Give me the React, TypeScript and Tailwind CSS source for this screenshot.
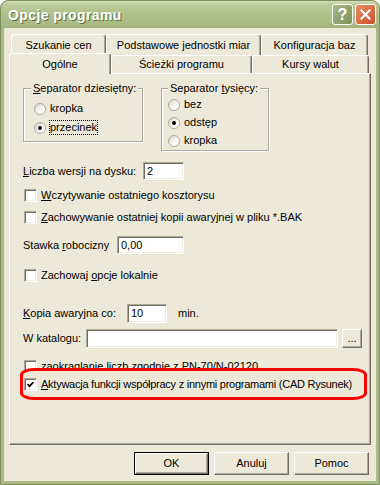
import React from "react";

function Check({ checked }: { checked?: boolean }) {
  return (
    <div className="w-[13px] h-[13px] shrink-0 bg-white border border-t-[#ACA899] border-l-[#ACA899] border-b-white border-r-white shadow-[inset_1px_1px_0_#716F64,inset_-1px_-1px_0_#F1EFE2] flex items-center justify-center">
      {checked && (
        <svg width="7" height="7" viewBox="0 0 7 7">
          <path d="M0.5 3 L2.5 5.2 L6.6 1" stroke="black" strokeWidth="1.7" fill="none" />
        </svg>
      )}
    </div>
  );
}

function Radio({ checked }: { checked?: boolean }) {
  return (
    <div className="w-[12px] h-[12px] shrink-0 rounded-full bg-[linear-gradient(135deg,#D8D5C6,#FFFFFF_70%)] border border-[#ACA899] flex items-center justify-center">
      {checked && <div className="w-[4px] h-[4px] rounded-full bg-black" />}
    </div>
  );
}

function Tab({ label, w, selected }: { label: string; w: string; selected?: boolean }) {
  if (selected) {
    return (
      <div
        className={`${w} h-[21px] mb-[-1px] relative z-10 bg-[#ECE9D8] border-l border-t border-white border-r border-r-[#716F64] rounded-t-[3px] shadow-[inset_-1px_0_0_#ACA899] flex items-center justify-center`}
      >
        {label}
      </div>
    );
  }
  return (
    <div
      className={`${w} h-full bg-[#ECE9D8] border-l border-t border-white border-r border-r-[#716F64] rounded-t-[3px] shadow-[inset_-1px_0_0_#ACA899] flex items-center justify-center`}
    >
      {label}
    </div>
  );
}

function Btn({ children, def }: { children: React.ReactNode; def?: boolean }) {
  if (def) {
    return (
      <div className="w-[75px] h-[23px] border border-black">
        <div className="w-full h-full bg-[#ECE9D8] border border-t-white border-l-white border-b-[#716F64] border-r-[#716F64] shadow-[inset_-1px_-1px_0_#ACA899] flex items-center justify-center">
          {children}
        </div>
      </div>
    );
  }
  return (
    <div className="w-[75px] h-[23px] bg-[#ECE9D8] border border-t-white border-l-white border-b-[#716F64] border-r-[#716F64] shadow-[inset_-1px_-1px_0_#ACA899] flex items-center justify-center">
      {children}
    </div>
  );
}

export default function App() {
  return (
    <div className="w-[380px] h-[485px] overflow-hidden bg-[#A9B987] border border-[#7E905A] rounded-t-[8px] flex flex-col font-['Liberation_Sans','Arial',sans-serif] text-[11px] leading-[13px] text-black whitespace-nowrap">
      {/* Title bar */}
      <div className="h-[27px] shrink-0 rounded-t-[7px] bg-[linear-gradient(to_bottom,#D6E1B8_0%,#BCCB99_12%,#B0C08B_50%,#A9BA84_85%,#A0B17B_100%)] flex items-center justify-between pl-[7px] pr-[3px]">
        <span className="text-white font-bold text-[14px] tracking-[0.4px] leading-[16px] [text-shadow:1px_1px_0_#5F6F3C]">Opcje programu</span>
        <div className="flex gap-[2px]">
          <div className="w-[21px] h-[21px] rounded-[3px] border border-white bg-[linear-gradient(135deg,#A9B884,#7F9058)] flex items-center justify-center text-white font-bold text-[16px] leading-[16px]">
            ?
          </div>
          <div className="w-[21px] h-[21px] rounded-[3px] border border-white bg-[linear-gradient(135deg,#EE8C63,#C8502C)] flex items-center justify-center">
            <svg width="11" height="11" viewBox="0 0 11 11">
              <path d="M1.5 1.5 L9.5 9.5 M9.5 1.5 L1.5 9.5" stroke="white" strokeWidth="2.2" strokeLinecap="square" />
            </svg>
          </div>
        </div>
      </div>

      {/* Client area */}
      <div className="mx-[3px] mb-[3px] h-[453px] bg-[#ECE9D8] flex flex-col">
        {/* tabs */}
        <div className="mt-[6px] ml-[5px] flex flex-col">
          <div className="h-[21px] pl-[2px] flex">
            <Tab label="Szukanie cen" w="w-[95px]" />
            <Tab label="Podstawowe jednostki miar" w="w-[155px]" />
            <Tab label="Konfiguracja baz" w="w-[107px]" />
          </div>
          <div className="h-[18px] flex items-end">
            <Tab label="Ogólne" w="w-[102px]" selected />
            <Tab label="Ścieżki programu" w="w-[141px]" />
            <Tab label="Kursy walut" w="w-[117px]" />
          </div>
        </div>

        {/* panel */}
        <div className="mx-[5px] h-[372px] border border-t-white border-l-white border-r-[#716F64] border-b-[#716F64] shadow-[inset_-1px_-1px_0_#ACA899] pl-[13px] flex flex-col">
          {/* groups */}
          <div className="mt-[14px] flex items-start">
            <div className="relative w-[120px] h-[54px] border border-[#ACA899] shadow-[inset_1px_1px_0_white,1px_1px_0_white] pt-[13px] pl-[10px] flex flex-col gap-[6px]">
              <span className="absolute -top-[7px] left-[7px] px-[2px] bg-[#ECE9D8]">
                <u>S</u>eparator dziesiętny:
              </span>
              <div className="h-[13px] flex items-center">
                <Radio />
                <span className="ml-[4px]">kropka</span>
              </div>
              <div className="h-[13px] flex items-center">
                <Radio checked />
                <span className="ml-[3px] border border-dotted border-black px-0 leading-[13px]">przecinek</span>
              </div>
            </div>
            <div className="relative ml-[18px] w-[108px] h-[63px] border border-[#ACA899] shadow-[inset_1px_1px_0_white,1px_1px_0_white] pt-[9px] pl-[6px] flex flex-col gap-[5px]">
              <span className="absolute -top-[7px] left-[6px] px-[2px] bg-[#ECE9D8]">
                Separator <u>t</u>ysięcy:
              </span>
              <div className="h-[13px] flex items-center">
                <Radio />
                <span className="ml-[4px]">bez</span>
              </div>
              <div className="h-[13px] flex items-center">
                <Radio checked />
                <span className="ml-[4px]">odstęp</span>
              </div>
              <div className="h-[13px] flex items-center">
                <Radio />
                <span className="ml-[4px]">kropka</span>
              </div>
            </div>
          </div>

          {/* Liczba wersji */}
          <div className="mt-[11px] h-[18px] flex items-center">
            <span className="w-[120px]">
              <u>L</u>iczba wersji na dysku:
            </span>
            <div className="w-[41px] h-[18px] bg-white border border-t-[#ACA899] border-l-[#ACA899] border-b-white border-r-white shadow-[inset_1px_1px_0_#716F64,inset_-1px_-1px_0_#F1EFE2] pl-[3px] flex items-center">
              2
            </div>
          </div>

          <div className="mt-[9px] h-[13px] flex items-center ml-[1px]">
            <Check />
            <span className="ml-[4px]">
              <u>W</u>czytywanie ostatniego kosztorysu
            </span>
          </div>

          <div className="mt-[9px] h-[13px] flex items-center ml-[1px]">
            <Check />
            <span className="ml-[4px]">
              <u>Z</u>achowywanie ostatniej kopii awaryjnej w pliku *.BAK
            </span>
          </div>

          <div className="mt-[12px] h-[18px] flex items-center">
            <span className="w-[94px]">
              Stawka <u>r</u>obocizny
            </span>
            <div className="w-[67px] h-[18px] bg-white border border-t-[#ACA899] border-l-[#ACA899] border-b-white border-r-white shadow-[inset_1px_1px_0_#716F64,inset_-1px_-1px_0_#F1EFE2] pl-[3px] flex items-center">
              0,00
            </div>
          </div>

          <div className="mt-[15px] h-[13px] flex items-center ml-[1px]">
            <Check />
            <span className="ml-[4px]">
              Zachowaj <u>o</u>pcje lokalnie
            </span>
          </div>

          <div className="mt-[22px] h-[19px] flex items-center">
            <span className="w-[104px]">
              <u>K</u>opia awaryjna co:
            </span>
            <div className="w-[40px] h-[19px] bg-white border border-t-[#ACA899] border-l-[#ACA899] border-b-white border-r-white shadow-[inset_1px_1px_0_#716F64,inset_-1px_-1px_0_#F1EFE2] pl-[3px] flex items-center">
              10
            </div>
            <span className="ml-[11px]">min.</span>
          </div>

          <div className="mt-[6px] h-[19px] flex items-center">
            <span className="w-[63px]">W katalogu:</span>
            <div className="w-[252px] h-[19px] bg-white border border-t-[#ACA899] border-l-[#ACA899] border-b-white border-r-white shadow-[inset_1px_1px_0_#716F64,inset_-1px_-1px_0_#F1EFE2]" />
            <div className="ml-[4px] w-[20px] h-[19px] bg-[#ECE9D8] border border-t-white border-l-white border-b-[#716F64] border-r-[#716F64] shadow-[inset_-1px_-1px_0_#ACA899] flex items-center justify-center leading-[10px] pb-[2px]">
              ...
            </div>
          </div>

          <div className="mt-[12px] h-[13px] flex items-center ml-[1px]">
            <Check />
            <span className="ml-[4px]">zaokrąglanie liczb zgodnie z PN-70/N-02120</span>
          </div>

          <div className="relative mt-[-5px] ml-[-3px] w-[347px] h-[32px] bg-[#ECE9D8] border-[3px] border-[#FF0000] rounded-[14px_/_7px] pl-[1px] flex items-center">
            <Check checked />
            <span className="ml-[4px] tracking-[-0.25px]">
              <u>A</u>ktywacja funkcji współpracy z innymi programami (CAD Rysunek)
            </span>
          </div>
        </div>

        {/* buttons */}
        <div className="mt-[7px] pr-[7px] flex justify-end gap-[5px]">
          <Btn def>OK</Btn>
          <Btn>Anuluj</Btn>
          <Btn>Pomoc</Btn>
        </div>
      </div>
    </div>
  );
}
